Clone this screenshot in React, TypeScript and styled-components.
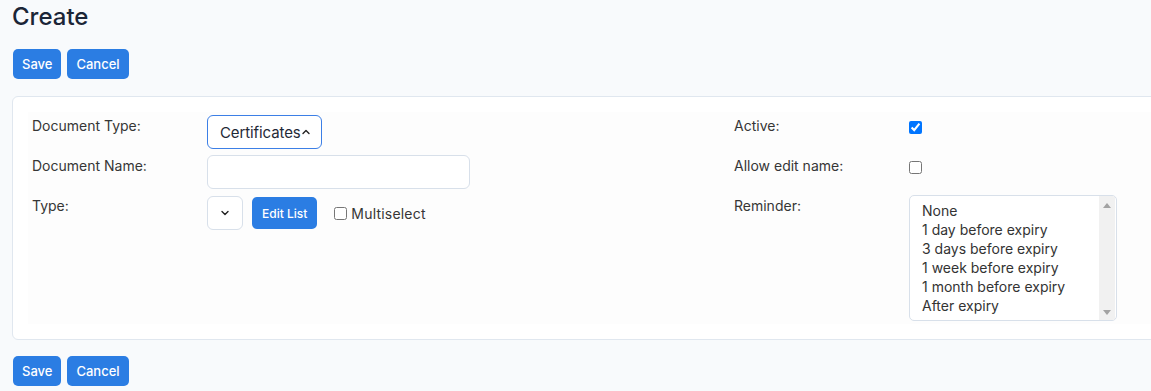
import React from 'react';
import styled, { createGlobalStyle } from 'styled-components';

const GlobalStyle = createGlobalStyle`
  html, body {
    margin: 0;
    background: #f8fafc;
    overflow: hidden;
  }
  body {
    font-family: Inter, "Noto Sans", sans-serif;
    color: #333;
  }
`;

const Page = styled.div`
  padding: 0 0 0 12px;
  width: 1440px;
`;

const Title = styled.h2`
  margin: 0;
  padding-top: 2px;
  font-size: 24px;
  font-weight: 500;
  line-height: 30px;
  color: #1b2537;
`;

const Toolbar = styled.div<{ $top: number }>`
  display: flex;
  gap: 6px;
  margin-top: ${p => p.$top}px;
  padding-left: 1px;
`;

const Button = styled.button<{ $small?: boolean }>`
  height: ${p => (p.$small ? 32 : 30)}px;
  padding: 0 ${p => (p.$small ? 10 : 9)}px;
  border: none;
  border-radius: 5px;
  background: #2b7de3;
  color: #fff;
  font-family: Inter, sans-serif;
  font-size: ${p => (p.$small ? 12 : 13)}px;
  font-weight: 500;
  cursor: pointer;
`;

const Card = styled.section`
  margin-top: 17px;
  background: #fff;
  border: 1px solid #e0e7ef;
  border-radius: 6px;
  padding: 15px;
  width: 1420px;
`;

const Grid = styled.div`
  display: grid;
  grid-template-columns: 702px 702px;
  background: #fdfdfd;
  padding: 3px 0;
`;

const Column = styled.div`
  display: flex;
  flex-direction: column;
  gap: 6px;
`;

const Field = styled.div`
  display: flex;
  align-items: flex-start;
  min-height: 34px;
`;

const Label = styled.label`
  width: 179px;
  flex: none;
  padding-left: 4px;
  box-sizing: border-box;
  font-size: 14px;
  line-height: 22px;
  color: #363636;
`;

const Controls = styled.div`
  display: flex;
  align-items: center;
  gap: 9px;
  margin-top: 1px;
`;

const DropButton = styled.button<{ $focused?: boolean; $width: number }>`
  display: flex;
  align-items: center;
  justify-content: ${p => (p.$focused ? 'flex-start' : 'center')};
  gap: 1px;
  box-sizing: border-box;
  width: ${p => p.$width}px;
  height: 34px;
  padding: 0 0 0 ${p => (p.$focused ? 12 : 0)}px;
  background: #fff;
  border: 1px solid ${p => (p.$focused ? '#3c7fe6' : '#d8e0ea')};
  border-radius: 6px;
  font-family: Inter, sans-serif;
  font-size: 15px;
  letter-spacing: -0.1px;
  color: #1f2937;
`;

const TextInput = styled.input`
  box-sizing: border-box;
  width: 263px;
  height: 34px;
  border: 1px solid #d8e0ea;
  border-radius: 6px;
  background: #fff;
  margin: 0;
`;

const CheckLabel = styled.label`
  display: flex;
  align-items: center;
  gap: 4px;
  margin-left: 8px;
  font-size: 14px;
  letter-spacing: 0.2px;
  color: #363636;
`;

const Check = styled.input`
  width: 13px;
  height: 13px;
  margin: 6px 0 0 0;
`;

const InlineCheck = styled(Check)`
  margin: 1px 0 0 0;
`;

const ListBox = styled.div`
  display: flex;
  box-sizing: border-box;
  width: 208px;
  height: 126px;
  border: 1px solid #d8e0ea;
  border-radius: 5px;
  background: #fff;
  overflow: hidden;
`;

const Options = styled.ul`
  flex: 1;
  margin: 0;
  padding: 5px 0 0 12px;
  list-style: none;
`;

const Option = styled.li`
  font-size: 14px;
  line-height: 19px;
  color: #333;
  white-space: nowrap;
`;

const ScrollTrack = styled.div`
  display: flex;
  flex-direction: column;
  justify-content: space-between;
  align-items: center;
  width: 16px;
  margin-right: 1px;
  padding: 7px 0 5px;
  box-sizing: border-box;
  background: #f1f1f1;
`;

const Arrow: React.FC<{ up?: boolean }> = ({ up }) => (
  <svg width="8" height="5" viewBox="0 0 8 5">
    <path d={up ? 'M0 5 L4 0 L8 5 Z' : 'M0 0 L4 5 L8 0 Z'} fill="#a3a3a3" />
  </svg>
);

const Chevron: React.FC<{ up?: boolean }> = ({ up }) => (
  <svg width="8" height="6" viewBox="0 0 8 6" fill="none">
    <path
      d={up ? 'M1 4.5 L4 1.5 L7 4.5' : 'M1 1.5 L4 4.5 L7 1.5'}
      stroke="#222"
      strokeWidth="1.4"
      strokeLinecap="round"
      strokeLinejoin="round"
    />
  </svg>
);

const reminders = [
  'None',
  '1 day before expiry',
  '3 days before expiry',
  '1 week before expiry',
  '1 month before expiry',
  'After expiry',
];

const Actions: React.FC<{ top: number }> = ({ top }) => (
  <Toolbar $top={top}>
    <Button>Save</Button>
    <Button>Cancel</Button>
  </Toolbar>
);

const App: React.FC = () => {
  return (
    <Page>
      <GlobalStyle />
      <Title>Create</Title>
      <Actions top={17} />
      <Card>
        <Grid>
          <Column>
            <Field>
              <Label>Document Type:</Label>
              <DropButton $focused $width={115}>
                Certificates<Chevron up />
              </DropButton>
            </Field>
            <Field>
              <Label>Document Name:</Label>
              <TextInput type="text" />
            </Field>
            <Field>
              <Label>Type:</Label>
              <Controls>
                <DropButton $width={36}>
                  <Chevron />
                </DropButton>
                <Button $small>Edit List</Button>
                <CheckLabel>
                  <InlineCheck type="checkbox" />
                  Multiselect
                </CheckLabel>
              </Controls>
            </Field>
          </Column>
          <Column>
            <Field>
              <Label>Active:</Label>
              <Check type="checkbox" defaultChecked />
            </Field>
            <Field>
              <Label>Allow edit name:</Label>
              <Check type="checkbox" />
            </Field>
            <Field>
              <Label>Reminder:</Label>
              <ListBox role="listbox" aria-multiselectable>
                <Options>
                  {reminders.map(r => (
                    <Option key={r} role="option">{r}</Option>
                  ))}
                </Options>
                <ScrollTrack>
                  <Arrow up />
                  <Arrow />
                </ScrollTrack>
              </ListBox>
            </Field>
          </Column>
        </Grid>
      </Card>
      <Actions top={16} />
    </Page>
  );
};

export default App;
